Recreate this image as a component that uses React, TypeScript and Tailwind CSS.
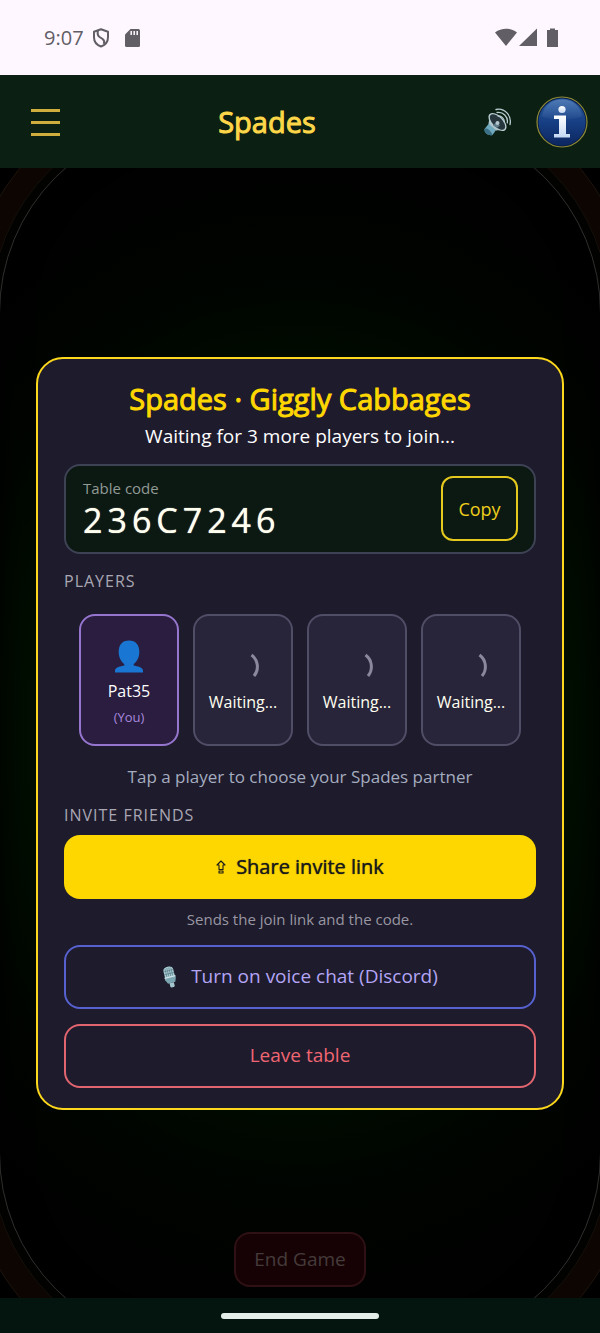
import React, { useState } from 'react'

interface Player {
  name: string
  joined: boolean
}

const players: Player[] = [
  { name: 'Pat35', joined: true },
  { name: 'Waiting...', joined: false },
  { name: 'Waiting...', joined: false },
  { name: 'Waiting...', joined: false },
]

const ShieldIcon = () => (
  <svg width="18" height="20" viewBox="0 0 18 20" fill="none" stroke="#625e66" strokeWidth="2">
    <path d="M9 1.2 16 3.8v5.4c0 4.400-2.900 7.800-7 9.300-4.100-1.500-7-4.900-7-9.300V3.800z" strokeLinejoin="round" />
    <path d="M6 3c-.8 2.500-.4 4.500 1.600 6l3 2c1.700 1.300 2 3.200 1.200 5" />
  </svg>
)

const SdCardIcon = () => (
  <svg width="15" height="18" viewBox="0 0 15 18">
    <path fill="#625e66" d="M5.500 0H13.500A1.500 1.500 0 0 1 15 1.500v15a1.500 1.500 0 0 1-1.500 1.500h-12A1.500 1.500 0 0 1 0 16.500V5.500z" />
    <path stroke="#fef7ff" strokeWidth="1.500" d="M6.200 2v4M9.200 2v4M12.200 2v4" />
  </svg>
)

const SpeakerIcon = () => (
  <svg width="28" height="28" viewBox="0 0 28 28" fill="none">
    <path d="M.500 21 5 15.500 12 22 8.500 27C4.500 28 0 25 .500 21z" fill="#6fa9bd" />
    <path d="M.500 21c1.200-1 2.800-.8 4.400.7S8.500 25.500 8.500 27C4.500 28 0 25 .500 21z" fill="#3c7086" />
    <path d="M4.500 15.800 6 6 21.500 21.500 12 22.500z" fill="#a9c3cb" />
    <ellipse cx="13.500" cy="14" rx="10.500" ry="5.500" transform="rotate(45 13.500 14)" fill="#26363c" stroke="#b9cdd3" strokeWidth="1.300" />
    <path d="m9 17.500 3.500-3.500 3.500 3.500L13 20z" fill="#607d8b" />
    <circle cx="13.500" cy="15" r="2" fill="#b5c7ce" />
    <path d="M14 8c3.500-.3 6.500 2.600 6.200 6M13 4.500c6-1 11.300 4 10.300 10.300M12 1.500c8.500-1.900 16 6 14 15" stroke="#b9cdd3" strokeWidth="1.300" strokeLinecap="round" />
  </svg>
)

const InfoIcon = () => (
  <svg width="52" height="52" viewBox="0 0 52 52">
    <defs>
      <linearGradient id="infoBall" x1="0" y1="0" x2="0" y2="1">
        <stop offset="0" stopColor="#2c5a9c" />
        <stop offset="0.500" stopColor="#173f84" />
        <stop offset="1" stopColor="#0c2660" />
      </linearGradient>
      <linearGradient id="infoShine" x1="0" y1="0" x2="0" y2="1">
        <stop offset="0" stopColor="#8cb4e4" stopOpacity="0.350" />
        <stop offset="1" stopColor="#8cb4e4" stopOpacity="0.050" />
      </linearGradient>
      <linearGradient id="infoMark" x1="0" y1="0" x2="0" y2="1">
        <stop offset="0" stopColor="#ffffff" />
        <stop offset="1" stopColor="#c4d8f4" />
      </linearGradient>
    </defs>
    <circle cx="26" cy="26" r="25" fill="#0a1f48" stroke="#8f8a35" strokeWidth="1.200" />
    <circle cx="26" cy="26" r="23.500" fill="url(#infoBall)" />
    <path d="M6 20C8 9 16 3.500 26 3.500S44 9 46 20c-9 5-31 5-40 0z" fill="url(#infoShine)" />
    <circle cx="26" cy="13.500" r="3.600" fill="url(#infoMark)" />
    <path d="M18 19.500h12v18.500h4v3.500H18V38h5V23h-5z" fill="url(#infoMark)" />
  </svg>
)

const PersonIcon = () => (
  <svg width="28" height="33" viewBox="0 0 28 33" fill="#1976d2">
    <path d="M14 .500c7 0 10.300 4.500 10.300 11.500 0 5.500-2.600 10-5.600 12v1.500c3.500 1 9.300 1.200 9.300 5.500v1.500H0V31c0-4.300 5.800-4.500 9.300-5.500V24c-3-2-5.600-6.500-5.600-12C3.700 5 7 .500 14 .500z" />
  </svg>
)

const Spinner = () => (
  <svg width="34" height="34" viewBox="0 0 34 34" fill="none" stroke="#8b889d" strokeWidth="3">
    <path d="M25.500 5A14.500 14.500 0 0 1 28 26" />
  </svg>
)

const ShareIcon = () => (
  <svg width="10" height="14" viewBox="0 0 10 14" fill="none" stroke="#1a1a1a" strokeWidth="1.100" strokeLinejoin="round">
    <path d="M5 1 9 5H7v4.500H3V5H1zM3 11h4v2H3z" />
  </svg>
)

const MicIcon = () => (
  <svg width="17" height="22" viewBox="0 0 17 22">
    <g transform="rotate(-14 8 11)">
      <path d="M3 4C3 1.800 5 .500 8 .500S13 1.800 13 4v7H3z" fill="#a9cbd2" />
      <path d="M5 2v8.500M7 1.500v9M9 1.500v9M11 2v8.500M3 4.500h10M3 7.500h10" stroke="#517782" strokeWidth=".6" />
      <path d="M2.500 10.500h11V13L12 17H4.500l-2-4z" fill="#7ba5b0" />
      <path d="M2.500 11h11" stroke="#d2e6ea" strokeWidth="1.200" />
      <path d="M6 17h4.500v3.500c0 1.500-4.500 1.500-4.500 0z" fill="#a5c6ce" />
    </g>
  </svg>
)

const StatusBar = () => (
  <div className="flex h-[75px] items-center justify-between bg-[#fef7ff] pr-[40px] pl-11 text-[#625e66]">
    <div className="flex items-center">
      <span className="mr-2 text-xl">9:07</span>
      <ShieldIcon />
      <span className="w-[15px]" />
      <SdCardIcon />
    </div>
    <svg width="65" height="20" viewBox="0 0 65 20" fill="#625e66">
      <path d="M0 4.500C6.500-.500 15.500-.500 22 4.500L11 18zM42 .500V18H24zM55 2V.500h5V2h3V19H52V2z" />
    </svg>
  </div>
)

const Header = () => (
  <header className="flex h-[93px] items-center justify-between bg-[#0b1f12] pr-3 pl-[31px]">
    <button type="button" aria-label="Menu" className="flex w-[29px] flex-col gap-[9px] pt-[2px]">
      <span className="h-[3px] w-full bg-[#d0ae3d]" />
      <span className="h-[3px] w-full bg-[#d0ae3d]" />
      <span className="h-[3px] w-full bg-[#d0ae3d]" />
    </button>
    <h1 className="text-[29px] text-[#fdd649] [-webkit-text-stroke:1px_#fdd649]">Spades</h1>
    <div className="flex items-center gap-6">
      <button type="button" aria-label="Sound" className="pl-[10px]">
        <SpeakerIcon />
      </button>
      <button type="button" aria-label="Info">
        <InfoIcon />
      </button>
    </div>
  </header>
)

const PlayerCard: React.FC<{ player: Player }> = ({ player }) => (
  <button
    type="button"
    className={`flex h-[132px] w-[100px] flex-col items-center justify-center rounded-2xl border-2 pt-2 text-base ${
      player.joined ? 'border-[#9575cd] bg-[#2a1d3f]' : 'border-[#504d66] bg-[#28253a]'
    }`}
  >
    {player.joined ? <PersonIcon /> : <Spinner />}
    <span className={player.joined ? 'mt-[6px] leading-6 text-white' : 'mt-[6px] mb-1 leading-6 text-[#fffff0]'}>
      {player.name}
    </span>
    {player.joined && <span className="mt-1 text-[13px] leading-5 text-[#a888de]">(You)</span>}
  </button>
)

const Lobby = () => {
  const [copied, setCopied] = useState<boolean>(false)

  return (
    <section className="relative mx-9 w-full rounded-[27px] border-2 border-[#fdd81c] bg-[#1e1b2c] px-[26px] py-5">
      <h2 className="text-center text-[29px] leading-[40px] text-[#ffd700] [-webkit-text-stroke:1px_#ffd700]">
        Spades · Giggly Cabbages
      </h2>
      <p className="text-center text-[19px] leading-[34px] text-white">Waiting for 3 more players to join...</p>

      <div className="mt-[11px] flex h-[90px] items-center justify-between rounded-2xl border-2 border-[#3d4254] bg-[#0c1812] pr-4 pl-[17px]">
        <div>
          <p className="text-[15px] leading-[22px] text-[#919a95]">Table code</p>
          <p className="text-[34px] leading-[42px] tracking-[5px] text-[#fffff0] [text-shadow:0_0_1px_#fffff0]">236C7246</p>
        </div>
        <button
          type="button"
          onClick={() => setCopied(true)}
          className="h-[65px] w-[77px] rounded-xl border-2 border-[#e6c91f] text-lg text-[#efcf1c]"
        >
          {copied ? 'Copied' : 'Copy'}
        </button>
      </div>

      <h3 className="mt-[15px] text-base leading-6 tracking-[1px] text-[#a9a7b3]">PLAYERS</h3>
      <div className="mt-[21px] flex justify-center gap-[14px]">
        {players.map((player, i) => (
          <PlayerCard key={i} player={player} />
        ))}
      </div>
      <p className="mt-[17px] text-center text-[17px] leading-7 text-[#a4acbf]">Tap a player to choose your Spades partner</p>

      <h3 className="mt-3 text-base leading-6 tracking-[1px] text-[#a9a7b3]">INVITE FRIENDS</h3>
      <button
        type="button"
        className="mt-2 flex h-16 w-full items-center justify-center gap-[10px] rounded-2xl bg-[#ffd700] text-xl text-[#1a1a1a] [text-shadow:0_0_1px_#1a1a1a]"
      >
        <ShareIcon />
        Share invite link
      </button>
      <p className="mt-2 text-center text-[15px] leading-6 text-[#9997a2]">Sends the join link and the code.</p>
      <button
        type="button"
        className="mt-[14px] flex h-16 w-full items-center justify-center gap-3 rounded-2xl border-2 border-[#5661cf] text-[19px] text-[#b3a5f5]"
      >
        <MicIcon />
        Turn on voice chat (Discord)
      </button>
      <button type="button" className="mt-[15px] h-16 w-full rounded-2xl border-2 border-[#e06570] text-[19px] text-[#ef6572]">
        Leave table
      </button>
    </section>
  )
}

const App: React.FC = () => {
  return (
    <div className="flex min-h-screen flex-col bg-black font-['Open_Sans',sans-serif]">
      <StatusBar />
      <Header />
      <main className="relative flex flex-1 items-center justify-center overflow-hidden">
        {/* table rail and felt */}
        <div className="absolute -inset-x-[33px] -inset-y-20 rounded-[224px] border border-[#1d140c] bg-[#0d0502]">
          <div className="absolute inset-[22px] rounded-[202px] border border-[#15100a] bg-[#020201]">
            <div className="absolute inset-2 rounded-[193px] border border-[#2f302e] bg-[radial-gradient(70%_42%_at_center,#001c02_0%,#001202_55%,#000500_85%,#000100_110%)] shadow-[inset_0_0_30px_#000000]" />
          </div>
        </div>
        <button
          type="button"
          className="absolute bottom-[11px] h-[55px] w-[132px] rounded-2xl border-2 border-[#2f1014] bg-[#160204] text-[19px] text-[#453b3b]"
        >
          End Game
        </button>
        <Lobby />
      </main>
      <footer className="flex h-[35px] items-center justify-center bg-[#04150f]">
        <div className="h-[6px] w-[158px] rounded-full bg-[#e3eee9]" />
      </footer>
    </div>
  )
}

export default App
